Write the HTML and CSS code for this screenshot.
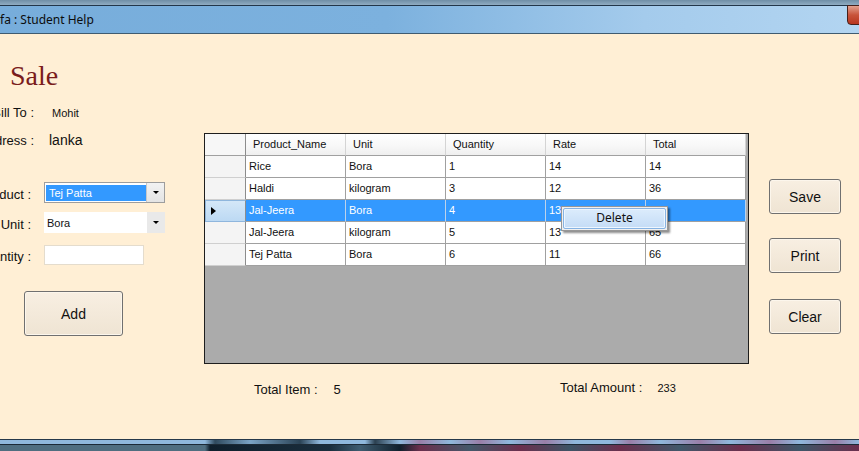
FILE: index.html
```html
<!DOCTYPE html>
<html>
<head>
<meta charset="utf-8">
<title>Sale</title>
<link rel="stylesheet" href="styles.css">
</head>
<body>
<div class="window">
  <div class="frame-top"></div>
  <div class="titlebar">
    <span class="title">fa : Student Help</span>
    <span class="close-btn"></span>
  </div>
  <div class="client">
    <div class="left">
      <h1 class="sale">Sale</h1>
      <div class="frow r-bill"><span class="lbl lw1"><span>Bill To :</span></span><span class="val-sm">Mohit</span></div>
      <div class="frow r-addr"><span class="lbl lw1"><span>Address :</span></span><span class="val-lg">lanka</span></div>
      <div class="frow r-prod"><span class="lbl lw2"><span>Product :</span></span>
        <div class="combo bordered"><span class="combo-text sel">Tej Patta</span><span class="combo-btn"><span class="tri-down"></span></span></div>
      </div>
      <div class="frow r-unit"><span class="lbl lw2"><span>Unit :</span></span>
        <div class="combo"><span class="combo-text">Bora</span><span class="combo-btn"><span class="tri-down"></span></span></div>
      </div>
      <div class="frow r-qty"><span class="lbl lw2"><span>Quantity :</span></span>
        <div class="textbox"></div>
      </div>
      <button class="btn btn-add">Add</button>
    </div>

    <div class="center">
      <div class="grid">
        <div class="grow ghead">
          <div class="gc rh corner"></div>
          <div class="gc hc">Product_Name</div>
          <div class="gc hc">Unit</div>
          <div class="gc hc">Quantity</div>
          <div class="gc hc">Rate</div>
          <div class="gc hc">Total</div>
        </div>
        <div class="grow">
          <div class="gc rh"></div>
          <div class="gc dc">Rice</div><div class="gc dc">Bora</div><div class="gc dc">1</div><div class="gc dc">14</div><div class="gc dc">14</div>
        </div>
        <div class="grow">
          <div class="gc rh"></div>
          <div class="gc dc">Haldi</div><div class="gc dc">kilogram</div><div class="gc dc">3</div><div class="gc dc">12</div><div class="gc dc">36</div>
        </div>
        <div class="grow selrow">
          <div class="gc rh rh-sel"><span class="tri-right"></span></div>
          <div class="gc dc">Jal-Jeera</div><div class="gc dc">Bora</div><div class="gc dc">4</div><div class="gc dc">13</div><div class="gc dc">52</div>
        </div>
        <div class="grow">
          <div class="gc rh"></div>
          <div class="gc dc">Jal-Jeera</div><div class="gc dc">kilogram</div><div class="gc dc">5</div><div class="gc dc">13</div><div class="gc dc">65</div>
        </div>
        <div class="grow">
          <div class="gc rh"></div>
          <div class="gc dc">Tej Patta</div><div class="gc dc">Bora</div><div class="gc dc">6</div><div class="gc dc">11</div><div class="gc dc">66</div>
        </div>
        <div class="ctx">
          <div class="ctx-item">Delete</div>
        </div>
      </div>
      <div class="totals">
        <div class="tot-group g1"><span class="tot-lbl">Total Item :</span><span class="tot-val">5</span></div>
        <div class="tot-group g2"><span class="tot-lbl">Total Amount :</span><span class="tot-val-sm">233</span></div>
      </div>
    </div>

    <div class="right">
      <button class="btn btn-side b-save">Save</button>
      <button class="btn btn-side b-print">Print</button>
      <button class="btn btn-side b-clear">Clear</button>
    </div>
  </div>
  <div class="taskbar">
    <div class="tb-strip"></div>
    <div class="tb-bottom"></div>
  </div>
</div>
</body>
</html>
```

FILE: styles.css
```css
html, body {
  margin: 0;
  padding: 0;
}
body {
  width: 859px;
  height: 451px;
  overflow: hidden;
  background: #FFEFD5;
  font-family: "Liberation Sans", Arial, sans-serif;
  color: #111;
}
.window {
  display: flex;
  flex-direction: column;
  width: 859px;
  height: 451px;
}
.frame-top {
  height: 5px;
  background: linear-gradient(#6f8ea6, #90acc2);
}
.titlebar {
  position: relative;
  height: 27px;
  border-top: 1px solid #22364a;
  border-bottom: 1px solid #3f5b70;
  background: linear-gradient(90deg, #77addb 0%, #7cb1de 45%, #a4cbec 75%, #b3d5f1 100%);
  display: flex;
  align-items: center;
}
.title {
  font-family: "Noto Sans", "Open Sans", sans-serif;
  font-size: 12px;
  color: #0c0c0c;
  padding-left: 0;
  margin-top: -1px;
}
.close-btn {
  position: absolute;
  left: 847px;
  top: -1px;
  width: 30px;
  height: 18px;
  border: 1px solid #45201b;
  border-radius: 0 0 0 4px;
  background: linear-gradient(#e3a18f, #c8533b 50%, #b8361f 100%);
}
.client {
  flex: 1;
  display: flex;
  background: #FFEFD5;
}

/* left form */
.left {
  width: 204px;
  flex-shrink: 0;
  display: flex;
  flex-direction: column;
  align-items: flex-start;
}
.sale {
  margin: 26px 0 0 10px;
  font-family: "Liberation Serif", "Times New Roman", serif;
  font-weight: normal;
  font-size: 28px;
  line-height: 32px;
  color: #7a1c1c;
}
.frow {
  display: flex;
  align-items: center;
}
.r-bill { margin-top: 10px; height: 20px; }
.r-addr { margin-top: 8px; height: 20px; }
.r-prod { margin-top: 32px; height: 21px; }
.r-unit { margin-top: 9px; height: 21px; }
.r-qty { margin-top: 12px; height: 20px; }
.lbl {
  display: flex;
  justify-content: flex-end;
  white-space: nowrap;
  flex-shrink: 0;
  font-size: 13px;
}
.lw1 { width: 34px; }
.lw2 { width: 31px; padding-top: 3px; }
.val-sm {
  margin-left: 18px;
  font-size: 11px;
  padding-top: 2px;
}
.val-lg {
  margin-left: 15px;
  font-size: 14px;
}
.combo {
  margin-left: 13px;
  width: 121px;
  height: 21px;
  box-sizing: border-box;
  background: #fff;
  display: flex;
  align-items: center;
  position: relative;
}
.combo.bordered {
  border: 1px solid #9d9d9d;
}
.combo-text {
  font-size: 11px;
  height: 16px;
  line-height: 16px;
  padding-left: 3px;
  width: 100px;
  box-sizing: border-box;
}
.combo.bordered .combo-text { margin-left: 1px; }
.combo-text.sel {
  background: #3399ff;
  color: #fff;
}
.combo-btn {
  margin-left: auto;
  width: 18px;
  height: 100%;
  background: #e9e9e9;
  display: flex;
  align-items: center;
  justify-content: center;
}
.combo.bordered .combo-btn {
  border-left: 1px solid #c8c8c8;
  box-sizing: border-box;
  background: linear-gradient(#f2f2f2, #e4e4e4);
}
.tri-down {
  width: 0;
  height: 0;
  border-left: 3px solid transparent;
  border-right: 3px solid transparent;
  border-top: 3px solid #000;
}
.textbox {
  margin-left: 13px;
  width: 100px;
  height: 20px;
  box-sizing: border-box;
  border: 1px solid #e4dccd;
  background: #fff;
}

.btn {
  font-family: "Liberation Sans", Arial, sans-serif;
  font-size: 14px;
  color: #111;
  border: 1px solid #707070;
  border-radius: 3px;
  background: linear-gradient(#f8efe2, #efe4d3);
  box-shadow: inset 0 0 0 1px #fcf6ec;
  padding: 0;
  box-sizing: border-box;
}
.btn-add {
  margin: 26px 0 0 24px;
  width: 99px;
  height: 45px;
}

/* center grid */
.center {
  width: 545px;
  flex-shrink: 0;
  display: flex;
  flex-direction: column;
}
.grid {
  position: relative;
  margin-top: 99px;
  width: 545px;
  height: 231px;
  box-sizing: border-box;
  border: 1px solid #1e1e1e;
  background: #ababab;
}
.grow {
  display: flex;
  height: 22px;
}
.gc {
  box-sizing: border-box;
  height: 22px;
  border-right: 1px solid #a0a0a0;
  border-bottom: 1px solid #a0a0a0;
  font-size: 11px;
  line-height: 21px;
  white-space: nowrap;
  overflow: hidden;
  width: 100px;
}
.rh {
  width: 41px;
  background: #f4f4f4;
  border-right: 1px solid #8c8c8c;
  border-bottom: 1px solid #cfcfcf;
}
.corner {
  background: #f7f7f7;
  border-bottom: 1px solid #a0a0a0;
}
.hc {
  background: linear-gradient(#ffffff, #f7f7f7 60%, #efefef);
  border-right: 1px solid #d4d4d4;
  padding-left: 7px;
  color: #111;
}
.dc {
  background: #fff;
  padding-left: 3px;
}
.selrow .dc {
  background: #3399ff;
  color: #fff;
  border-right-color: #bcd2ea;
}
.rh-sel {
  background: linear-gradient(#d4e7f8, #bcd9f3);
  border: 1px solid #8fb6dd;
  border-right: 1px solid #8c8c8c;
  display: flex;
  align-items: center;
  padding-left: 5px;
}
.tri-right {
  width: 0;
  height: 0;
  border-top: 4px solid transparent;
  border-bottom: 4px solid transparent;
  border-left: 5px solid #000;
}
.ctx {
  position: absolute;
  left: 356px;
  top: 72px;
  width: 107px;
  height: 25px;
  box-sizing: border-box;
  border: 1px solid #979797;
  background: #f0f0f0;
  padding: 1px;
  box-shadow: 2px 2px 2px rgba(0, 0, 0, 0.45);
}
.ctx-item {
  height: 21px;
  box-sizing: border-box;
  border: 1px solid #86b3e3;
  border-radius: 2px;
  background: linear-gradient(#dcecfc, #c4dcf6);
  box-shadow: inset 0 0 0 1px #eef6fe;
  font-family: "Noto Sans", "Open Sans", sans-serif;
  font-size: 12px;
  line-height: 18px;
  text-align: center;
  color: #111;
}
.totals {
  display: flex;
  align-items: center;
  margin-top: 17px;
  height: 16px;
  padding-left: 50px;
}
.tot-group {
  display: flex;
  align-items: baseline;
}
.g1 { width: 306px; }
.g2 { margin-top: -3px; }
.tot-lbl { font-size: 13px; }
.tot-val { font-size: 13px; margin-left: 16px; }
.tot-val-sm { font-size: 11px; margin-left: 15px; }

/* right buttons */
.right {
  margin-left: 20px;
  display: flex;
  flex-direction: column;
}
.btn-side {
  width: 72px;
  height: 35px;
}
.b-save { margin-top: 145px; }
.b-print { margin-top: 24px; }
.b-clear { margin-top: 26px; }

/* bottom strip */
.taskbar {
  height: 12px;
  border-top: 1px solid #26394a;
  box-sizing: border-box;
  display: flex;
  flex-direction: column;
}
.tb-strip {
  height: 4px;
  background: linear-gradient(90deg, #8fb8dc 0px, #8fb8dc 205px, #2f4a5e 215px, #7aa3c5 250px, #2a4356 300px, #8fb8dc 320px, #8fb8dc 365px, #2b4050 375px, #8fb8dc 400px, #9a7fa8 420px, #8fb8dc 450px, #9a7fa8 480px, #8fb8dc 510px, #9a7fa8 545px, #8fb8dc 575px, #8fb8dc 610px, #9a7fa8 630px, #8fb8dc 660px, #9a7fa8 700px, #8fb8dc 730px, #9a7fa8 770px, #8fb8dc 800px, #9a7fa8 835px, #8fb8dc 859px);
}
.tb-bottom {
  flex: 1;
  border-top: 1px solid #1c2a36;
  background: linear-gradient(90deg, #4f6e80 0px, #4f6e80 205px, #0f1f2c 210px, #1a2e3d 330px, #3e5c70 360px, #10202c 400px, #6b2f4d 420px, #44586a 470px, #6b2f4d 520px, #3d5466 570px, #6b2f4d 620px, #40586a 680px, #6b2f4d 740px, #3e5668 800px, #6b2f4d 859px);
}
```
